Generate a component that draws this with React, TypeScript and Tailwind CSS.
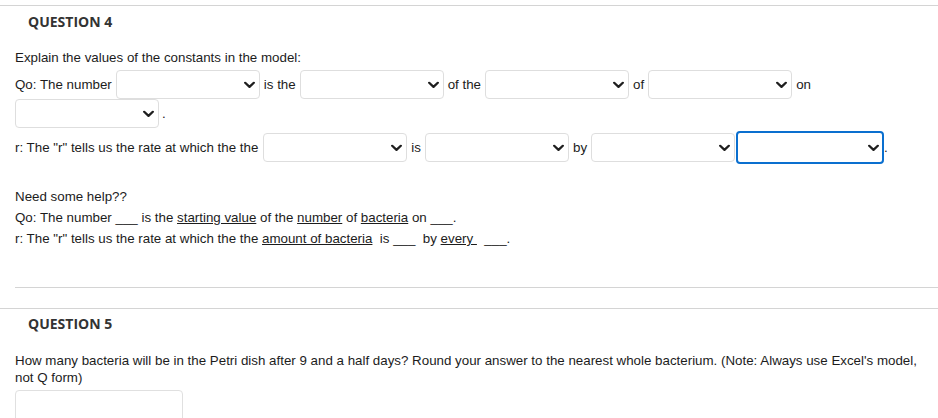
import React from 'react';

function Chevron() {
  return (
    <svg
      className="pointer-events-none absolute right-[5px] top-1/2 -translate-y-1/2"
      width="11"
      height="7"
      viewBox="0 0 11 7"
      fill="none"
    >
      <path
        d="M1.2 1.2 L5.5 5.4 L9.8 1.2"
        stroke="#1f1f1f"
        strokeWidth="2.3"
        strokeLinecap="round"
        strokeLinejoin="round"
      />
    </svg>
  );
}

function Dropdown({ focused = false }: { focused?: boolean }) {
  return (
    <span className="relative inline-flex shrink-0">
      <select
        className={
          focused
            ? 'appearance-none w-[148px] h-[33px] -my-[2px] rounded-[4px] border-2 border-[#0a6fcf] bg-white outline-none'
            : 'appearance-none w-[144px] h-[29px] rounded-[4px] border border-[#dedede] bg-white outline-none'
        }
        defaultValue=""
      >
        <option value=""></option>
      </select>
      <Chevron />
    </span>
  );
}

function Blank() {
  return <span>___</span>;
}

export default function App() {
  return (
    <div className="w-[938px] h-[418px] overflow-hidden bg-white font-['Liberation_Sans',Arial,sans-serif] text-[13.33px] leading-[17px] text-[#1c1c1c]">
      <div className="pt-[5px]">
        <div className="h-px bg-[#d4d4d4]" />
      </div>

      <h2 className="pl-[28px] pt-[6px] h-[30px] font-['Open_Sans',sans-serif] font-bold text-[14px] leading-[19px] text-[#333]">
        QUESTION 4
      </h2>

      <div className="pl-[15px] pr-[10px]">
        <p className="mt-[13px] leading-[17px]">
          Explain the values of the constants in the model:
        </p>

        <div className="mt-[4px] flex items-center gap-x-[4px] h-[29px]">
          <span>Qo: The number</span>
          <Dropdown />
          <span>is the</span>
          <Dropdown />
          <span>of the</span>
          <Dropdown />
          <span>of</span>
          <Dropdown />
          <span>on</span>
        </div>
        <div className="flex items-center gap-x-[3px] h-[29px]">
          <Dropdown />
          <span>.</span>
        </div>

        <div className="mt-[5px] flex items-center gap-x-[4px] h-[29px]">
          <span className="mr-[1px]">r: The "r" tells us the rate at which the the</span>
          <Dropdown />
          <span>is</span>
          <Dropdown />
          <span>by</span>
          <Dropdown />
          <span className="-ml-[3px]">
            <Dropdown focused />
          </span>
          <span className="-ml-[4px]">.</span>
        </div>

        <div className="mt-[26px] flex flex-col gap-y-[4px]">
          <p>Need some help??</p>
          <p>
            Qo: The number <Blank /> is the <u>starting value</u> of the{' '}
            <u>number</u> of <u>bacteria</u> on <Blank />.
          </p>
          <p>
            r: The "r" tells us the rate at which the the{' '}
            <u>amount of bacteria</u>&nbsp; is <Blank />&nbsp; by{' '}
            <u>every&nbsp;</u>&nbsp; <Blank />.
          </p>
        </div>
      </div>

      <div className="mt-[40px] pl-[15px]">
        <div className="h-px bg-[#d4d4d4]" />
      </div>
      <div className="mt-[20px] h-px bg-[#d4d4d4]" />

      <h2 className="pl-[28px] pt-[5px] font-['Open_Sans',sans-serif] font-bold text-[14px] leading-[19px] text-[#333]">
        QUESTION 5
      </h2>

      <div className="pl-[15px] pr-[12px]">
        <p className="mt-[19px] leading-[17px]">
          How many bacteria will be in the Petri dish after 9 and a half days?
          Round your answer to the nearest whole bacterium. (Note: Always use
          Excel's model, not Q form)
        </p>
        <input
          type="text"
          className="mt-[4px] block w-[168px] h-[34px] rounded-[4px] border border-[#e0e0e0] bg-white outline-none"
        />
      </div>
    </div>
  );
}
